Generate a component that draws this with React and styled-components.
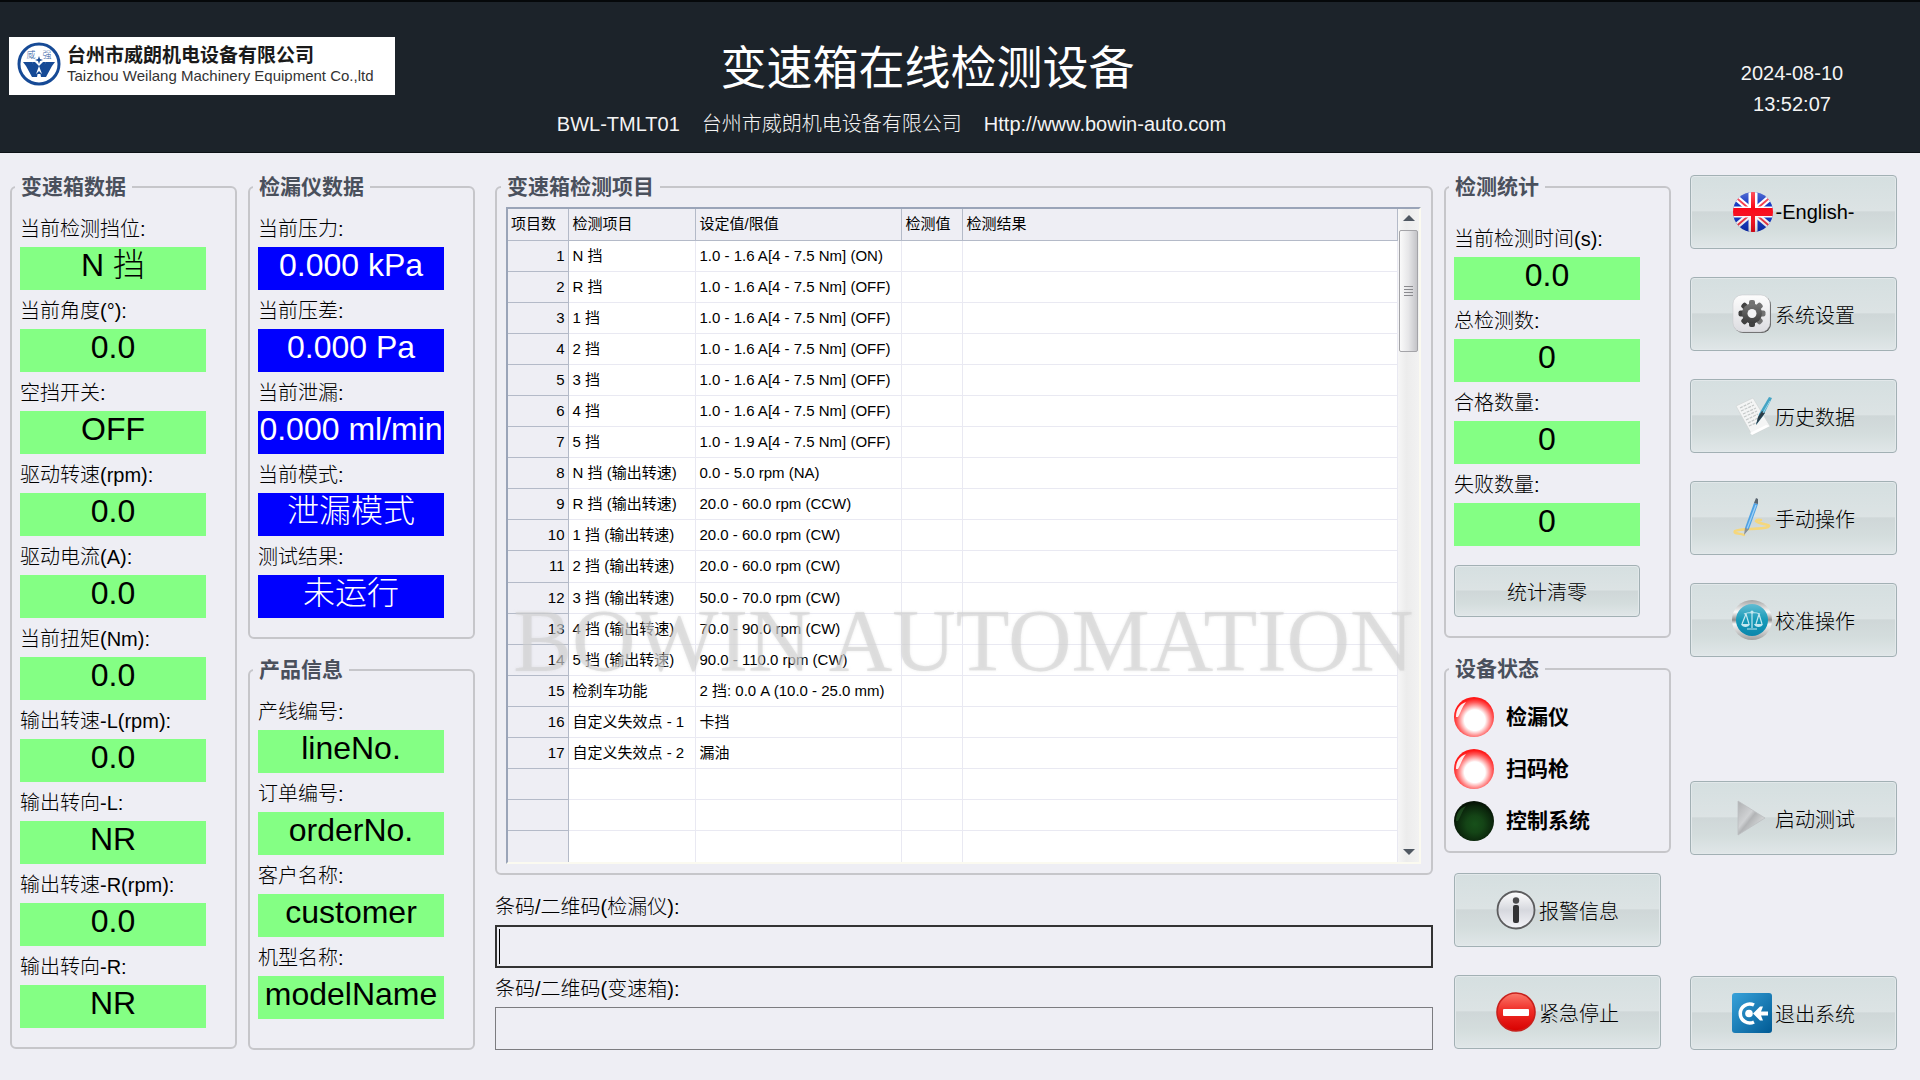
import React from "react";
import styled, { createGlobalStyle } from "styled-components";

const transmission = [
  { id: "gear", label: "当前检测挡位:", value: "N 挡" },
  { id: "angle", label: "当前角度(°):", value: "0.0" },
  { id: "neutral", label: "空挡开关:", value: "OFF" },
  { id: "drive-speed", label: "驱动转速(rpm):", value: "0.0" },
  { id: "drive-current", label: "驱动电流(A):", value: "0.0" },
  { id: "torque", label: "当前扭矩(Nm):", value: "0.0" },
  { id: "speed-l", label: "输出转速-L(rpm):", value: "0.0" },
  { id: "dir-l", label: "输出转向-L:", value: "NR" },
  { id: "speed-r", label: "输出转速-R(rpm):", value: "0.0" },
  { id: "dir-r", label: "输出转向-R:", value: "NR" },
];

const leak = [
  { id: "pressure", label: "当前压力:", value: "0.000 kPa" },
  { id: "pressure-diff", label: "当前压差:", value: "0.000 Pa" },
  { id: "leakage", label: "当前泄漏:", value: "0.000 ml/min" },
  { id: "mode", label: "当前模式:", value: "泄漏模式" },
  { id: "result", label: "测试结果:", value: "未运行" },
];

const product = [
  { id: "line", label: "产线编号:", value: "lineNo." },
  { id: "order", label: "订单编号:", value: "orderNo." },
  { id: "customer", label: "客户名称:", value: "customer" },
  { id: "model", label: "机型名称:", value: "modelName" },
];

const stats = [
  { id: "time", label: "当前检测时间(s):", value: "0.0" },
  { id: "total", label: "总检测数:", value: "0" },
  { id: "passed", label: "合格数量:", value: "0" },
  { id: "failed", label: "失败数量:", value: "0" },
];

const devices = [
  { name: "检漏仪", on: true },
  { name: "扫码枪", on: true },
  { name: "控制系统", on: false },
];

const items = [
  ["N 挡", "1.0 - 1.6 A[4 - 7.5 Nm] (ON)"],
  ["R 挡", "1.0 - 1.6 A[4 - 7.5 Nm] (OFF)"],
  ["1 挡", "1.0 - 1.6 A[4 - 7.5 Nm] (OFF)"],
  ["2 挡", "1.0 - 1.6 A[4 - 7.5 Nm] (OFF)"],
  ["3 挡", "1.0 - 1.6 A[4 - 7.5 Nm] (OFF)"],
  ["4 挡", "1.0 - 1.6 A[4 - 7.5 Nm] (OFF)"],
  ["5 挡", "1.0 - 1.9 A[4 - 7.5 Nm] (OFF)"],
  ["N 挡 (输出转速)", "0.0 - 5.0 rpm (NA)"],
  ["R 挡 (输出转速)", "20.0 - 60.0 rpm (CCW)"],
  ["1 挡 (输出转速)", "20.0 - 60.0 rpm (CW)"],
  ["2 挡 (输出转速)", "20.0 - 60.0 rpm (CW)"],
  ["3 挡 (输出转速)", "50.0 - 70.0 rpm (CW)"],
  ["4 挡 (输出转速)", "70.0 - 90.0 rpm (CW)"],
  ["5 挡 (输出转速)", "90.0 - 110.0 rpm (CW)"],
  ["检刹车功能", "2 挡: 0.0 A (10.0 - 25.0 mm)"],
  ["自定义失效点 - 1", "卡挡"],
  ["自定义失效点 - 2", "漏油"],
];

const TOTAL_ROWS = 20;

const LogoMark = () => (
  <svg width="44" height="44" viewBox="0 0 44 44" aria-hidden="true">
    <circle cx="22" cy="22" r="20" fill="#fff" stroke="#164a96" strokeWidth="3" />
    <path d="M6 20h9l6 10-1 5h-5l-6-11z" fill="#164a96" />
    <path d="M38 20h-9l-6 10 1 5h5l6-11z" fill="#164a96" />
    <path d="M15 20l3 0 4 4 4-4h3l-5 12h-4z" fill="#164a96" />
    <path d="M22 24l3 8-3-3-3 3z" fill="#fff" />
    <path d="M22 14l1 3 3 1-3 1-1 3-1-3-3-1 3-1z" fill="#164a96" />
    <text x="14" y="16" fontSize="9" textAnchor="middle" fill="#2f5ea4">
      威
    </text>
    <text x="30" y="16" fontSize="9" textAnchor="middle" fill="#2f5ea4">
      强
    </text>
  </svg>
);

const FlagIcon = () => (
  <svg width="40" height="40" viewBox="0 0 40 40" aria-hidden="true">
    <defs>
      <clipPath id="flag-clip">
        <circle cx="20" cy="20" r="20" />
      </clipPath>
      <linearGradient id="flag-shine" x1="0" y1="0" x2="0" y2="1">
        <stop offset="0" stopColor="#fff" stopOpacity="0.3" />
        <stop offset="0.4" stopColor="#fff" stopOpacity="0" />
        <stop offset="1" stopColor="#000" stopOpacity="0.2" />
      </linearGradient>
    </defs>
    <g clipPath="url(#flag-clip)">
      <rect width="40" height="40" fill="#0a2fc0" />
      <path d="M0 3l40 34M40 3L0 37" stroke="#fff" strokeWidth="6" />
      <path d="M0 3l40 34M40 3L0 37" stroke="#f43040" strokeWidth="2" />
      <path d="M20 0v40" stroke="#fff" strokeWidth="9" />
      <path d="M0 20h40" stroke="#fff" strokeWidth="11" />
      <path d="M20 0v40" stroke="#fa0818" strokeWidth="4" />
      <path d="M0 20h40" stroke="#fa0818" strokeWidth="8" />
      <rect width="40" height="40" fill="url(#flag-shine)" />
    </g>
  </svg>
);

const GearIcon = () => (
  <svg width="40" height="40" viewBox="0 0 40 40" aria-hidden="true">
    <defs>
      <linearGradient id="gear-bg" x1="0" y1="0" x2="0" y2="1">
        <stop offset="0" stopColor="#fdfdfd" />
        <stop offset="1" stopColor="#dcdce0" />
      </linearGradient>
      <linearGradient id="gear-fg" x1="0" y1="0" x2="0" y2="1">
        <stop offset="0" stopColor="#777" />
        <stop offset="1" stopColor="#3c3c3c" />
      </linearGradient>
    </defs>
    <rect x="2" y="2" width="37" height="37" rx="9" fill="#5a5a5a" />
    <rect x="1" y="1" width="37" height="37" rx="9" fill="url(#gear-bg)" stroke="#c4c4c8" strokeWidth="0.5" />
    <g fill="url(#gear-fg)">
      {[0, 45, 90, 135].map((turn) => (
        <rect key={turn} x="17" y="6" width="6" height="27" rx="2" transform={`rotate(${turn} 20 19.5)`} />
      ))}
      <circle cx="20" cy="19.5" r="10" />
    </g>
    <circle cx="20" cy="19.5" r="4.5" fill="#f2f2f4" />
  </svg>
);

const HistoryIcon = () => (
  <svg width="40" height="40" viewBox="0 0 40 40" aria-hidden="true">
    <path d="M4 10L21 2l17 28-18 9z" fill="#f4f5f5" stroke="#d0d4d4" strokeWidth="0.7" />
    <path d="M20 39l18-9-4-1-16 8z" fill="#fff" />
    <path
      d="M8 12l12-6M9 15l13-6M11 18l13-6M12 21l13-6M14 24l12-6M16 27l10-5M17 30l9-4"
      stroke="#c4c8c8"
      strokeWidth="1.2"
      strokeDasharray="3 1"
    />
    <path d="M37 1l3 1-9 18-7 9 3-11z" fill="#45a4c4" />
    <path d="M30 15l3 2-9 12 2-8z" fill="#2a3d48" />
    <path d="M38 5l-7 12" stroke="#9ad8ea" strokeWidth="1" />
  </svg>
);

const PenIcon = () => (
  <svg width="40" height="40" viewBox="0 0 40 40" aria-hidden="true">
    <path
      d="M12 37c-4-2-11-1-9-4 6-3 25-1 33-4 5-3-8-2-12-6 1-2 4-1 5-1"
      fill="none"
      stroke="#f5d77c"
      strokeWidth="2.5"
      strokeLinecap="round"
    />
    <path d="M22 5l4 1-9 25-4 4v-5z" fill="#4ea2e4" />
    <path d="M24 7l-9 24" stroke="#9fd0f6" strokeWidth="1.3" />
    <path d="M22 5l2-5 2 1v5z" fill="#5a6570" />
    <path d="M13 30l4 1-5 6z" fill="#8b8f92" />
  </svg>
);

const ScalesIcon = () => (
  <svg width="40" height="40" viewBox="0 0 40 40" aria-hidden="true">
    <defs>
      <linearGradient id="scales-ring" x1="0" y1="0" x2="0" y2="1">
        <stop offset="0" stopColor="#a4a4a4" />
        <stop offset="0.3" stopColor="#fafafa" />
        <stop offset="0.5" stopColor="#8c8c8c" />
        <stop offset="0.6" stopColor="#f6f6f6" />
        <stop offset="1" stopColor="#a0a0a0" />
      </linearGradient>
      <linearGradient id="scales-bg" x1="0" y1="0" x2="0" y2="1">
        <stop offset="0" stopColor="#62bcd2" />
        <stop offset="0.5" stopColor="#179ab8" />
        <stop offset="1" stopColor="#0a86ac" />
      </linearGradient>
    </defs>
    <circle cx="20" cy="20" r="20" fill="url(#scales-ring)" />
    <circle cx="20" cy="20" r="16" fill="url(#scales-bg)" />
    <g fill="none" stroke="#c4e8f0" strokeWidth="1.2">
      <path d="M20 11v17M12 14c4-2 12-2 16 0M15 29h10M14 14l-4 10M14 14l3 10M27 14l-3 10M27 14l3 10" />
    </g>
    <path d="M9 24h9c-1 4-8 4-9 0zM22 24h9c-1 4-8 4-9 0z" fill="#c4e8f0" />
    <circle cx="20" cy="12" r="1.6" fill="#c4e8f0" />
  </svg>
);

const PlayIcon = () => (
  <svg width="40" height="40" viewBox="0 0 40 40" aria-hidden="true">
    <defs>
      <linearGradient id="play-fill" x1="0" y1="0" x2="1" y2="1">
        <stop offset="0" stopColor="#aeb0b2" />
        <stop offset="0.4" stopColor="#d0d2d4" />
        <stop offset="0.5" stopColor="#b2b4b6" />
        <stop offset="0.8" stopColor="#dadcdd" />
      </linearGradient>
    </defs>
    <path d="M6 3l27 17L6 37z" fill="url(#play-fill)" stroke="#bcbfc1" strokeWidth="0.8" />
  </svg>
);

const InfoIcon = () => (
  <svg width="40" height="40" viewBox="0 0 40 40" aria-hidden="true">
    <defs>
      <linearGradient id="info-bg" x1="0" y1="0" x2="0" y2="1">
        <stop offset="0" stopColor="#fff" />
        <stop offset="0.5" stopColor="#d6d8de" />
        <stop offset="1" stopColor="#f4f4f8" />
      </linearGradient>
    </defs>
    <circle cx="20" cy="20" r="18.5" fill="url(#info-bg)" stroke="#5c5c5e" strokeWidth="1.8" />
    <circle cx="20" cy="10.5" r="3.2" fill="#4a4a4c" />
    <rect x="17" y="15" width="6" height="18" rx="2" fill="#333335" />
  </svg>
);

const StopIcon = () => (
  <svg width="40" height="40" viewBox="0 0 40 40" aria-hidden="true">
    <defs>
      <linearGradient id="stop-bg" x1="0" y1="0" x2="0" y2="1">
        <stop offset="0" stopColor="#fb7a6c" />
        <stop offset="0.45" stopColor="#f02e28" />
        <stop offset="1" stopColor="#d80000" />
      </linearGradient>
    </defs>
    <circle cx="20" cy="20" r="19" fill="url(#stop-bg)" stroke="#c8201c" strokeWidth="1.6" />
    <rect x="7" y="17" width="26" height="7" rx="1" fill="#fff" />
  </svg>
);

const ExitIcon = () => (
  <svg width="40" height="40" viewBox="0 0 40 40" aria-hidden="true">
    <defs>
      <linearGradient id="exit-bg" x1="0" y1="0" x2="1" y2="1">
        <stop offset="0" stopColor="#38a2da" />
        <stop offset="1" stopColor="#005a94" />
      </linearGradient>
    </defs>
    <rect width="40" height="40" rx="3" fill="url(#exit-bg)" />
    <path d="M22 12a9.5 9.5 0 1 0 0 17" fill="none" stroke="#fff" strokeWidth="3.5" />
    <circle cx="17" cy="20.5" r="3.8" fill="#fff" />
    <path d="M21 20.500l7-7h3l-2 5h7v4h-7l2 5h-3z" fill="#fff" />
  </svg>
);

const Led = ({ on, index }) => (
  <svg width="40" height="40" viewBox="0 0 40 40" aria-hidden="true">
    <defs>
      <radialGradient id={`led-${index}`} cx="0.52" cy="0.58" r="0.54">
        <stop offset="0" stopColor={on ? "#fff" : "#17501a"} />
        <stop offset={on ? "0.48" : "0.4"} stopColor={on ? "#fff" : "#144416"} />
        <stop offset="0.82" stopColor={on ? "#ff5c5c" : "#0b260c"} />
        <stop offset="1" stopColor={on ? "#ff1818" : "#061406"} />
      </radialGradient>
    </defs>
    <circle cx="20" cy="20" r="20" fill={`url(#led-${index})`} />
    <path d="M2 20C2 12 6 7 12 5c-4 5-5 10-8 15z" fill={on ? "#fff" : "#2b6a2e"} opacity={on ? 0.9 : 0.5} />
  </svg>
);

const FieldList = ({ fields, tone }) =>
  fields.map(({ id, label, value }) => (
    <Field key={id}>
      <FieldLabel htmlFor={id}>{label}</FieldLabel>
      <Readout id={id} $tone={tone}>
        {value}
      </Readout>
    </Field>
  ));

const ItemTable = () => (
  <TableFrame>
    <Table>
      <colgroup>
        <NumberCol />
        <ItemCol />
        <LimitCol />
        <ValueCol />
        <col />
      </colgroup>
      <thead>
        <tr>
          <th scope="col">项目数</th>
          <th scope="col">检测项目</th>
          <th scope="col">设定值/限值</th>
          <th scope="col">检测值</th>
          <th scope="col">检测结果</th>
        </tr>
      </thead>
      <tbody>
        {Array.from({ length: TOTAL_ROWS }, (_, i) => {
          const [name, limit] = items[i] || [];
          return (
            <tr key={i}>
              <th scope="row">{name && i + 1}</th>
              <td>{name}</td>
              <td>{limit}</td>
              <td />
              <td />
            </tr>
          );
        })}
      </tbody>
    </Table>
    <Scrollbar>
      <Arrow viewBox="0 0 12 8">
        <path d="M0 7l6-6 6 6z" />
      </Arrow>
      <Thumb />
      <Arrow viewBox="0 0 12 8">
        <path d="M0 1l6 6 6-6z" />
      </Arrow>
    </Scrollbar>
    <Watermark>BOWIN AUTOMATION</Watermark>
  </TableFrame>
);

const App = () => {
  return (
    <>
      <GlobalStyle />
      <Header>
        <Logo>
          <LogoMark />
          <div>
            <LogoName>台州市威朗机电设备有限公司</LogoName>
            <LogoSub>Taizhou Weilang Machinery Equipment Co.,ltd</LogoSub>
          </div>
        </Logo>
        <Heading>
          <h1>变速箱在线检测设备</h1>
          <Subline>
            <span>BWL-TMLT01</span>
            <span>台州市威朗机电设备有限公司</span>
            <a href="http://www.bowin-auto.com">Http://www.bowin-auto.com</a>
          </Subline>
        </Heading>
        <Clock>
          <span>2024-08-10</span>
          <span>13:52:07</span>
        </Clock>
      </Header>

      <Main>
        <Column>
          <Panel>
            <legend>变速箱数据</legend>
            <FieldList fields={transmission} />
          </Panel>
        </Column>

        <Column>
          <Panel>
            <legend>检漏仪数据</legend>
            <FieldList fields={leak} tone="blue" />
          </Panel>
          <Panel $grow>
            <legend>产品信息</legend>
            <FieldList fields={product} />
          </Panel>
        </Column>

        <Center>
          <TablePanel>
            <legend>变速箱检测项目</legend>
            <ItemTable />
          </TablePanel>
          <Field>
            <FieldLabel htmlFor="code-leak">条码/二维码(检漏仪):</FieldLabel>
            <CodeBox>
              <CodeInput id="code-leak" type="text" $active />
              <Caret />
            </CodeBox>
          </Field>
          <Field>
            <FieldLabel htmlFor="code-gearbox">条码/二维码(变速箱):</FieldLabel>
            <CodeBox>
              <CodeInput id="code-gearbox" type="text" />
            </CodeBox>
          </Field>
        </Center>

        <Column>
          <StatsPanel>
            <legend>检测统计</legend>
            <FieldList fields={stats} />
            <ResetButton type="button">统计清零</ResetButton>
          </StatsPanel>
          <StatusPanel>
            <legend>设备状态</legend>
            <DeviceList>
              {devices.map(({ name, on }, i) => (
                <li key={name}>
                  <Led on={on} index={i} />
                  {name}
                </li>
              ))}
            </DeviceList>
          </StatusPanel>
          <AlarmActions>
            <Button type="button">
              <InfoIcon />
              报警信息
            </Button>
            <Button type="button">
              <StopIcon />
              紧急停止
            </Button>
          </AlarmActions>
        </Column>

        <Actions>
          <Button type="button">
            <FlagIcon />
            -English-
          </Button>
          <Button type="button">
            <GearIcon />
            系统设置
          </Button>
          <Button type="button">
            <HistoryIcon />
            历史数据
          </Button>
          <Button type="button">
            <PenIcon />
            手动操作
          </Button>
          <Button type="button">
            <ScalesIcon />
            校准操作
          </Button>
          <StartButton type="button">
            <PlayIcon />
            启动测试
          </StartButton>
          <ExitButton type="button">
            <ExitIcon />
            退出系统
          </ExitButton>
        </Actions>
      </Main>
    </>
  );
};

const GlobalStyle = createGlobalStyle`
  * {
    box-sizing: border-box;
  }
  body {
    margin: 0;
    background: #eeeef4;
    color: #000;
    font: 20px "Liberation Sans", "Noto Sans CJK SC", sans-serif;
    font-weight: 300;
  }
  button, input {
    font: inherit;
    color: inherit;
  }
`;

const Header = styled.header`
  display: grid;
  grid-template-columns: 386px 1fr 516px;
  height: 153px;
  padding: 0 8px 0 9px;
  background: #1c232a;
  border-top: 2px solid #05080a;
  border-bottom: 1px solid #0c1116;
  color: #f4f4f4;
`;

const Logo = styled.div`
  display: flex;
  gap: 6px;
  height: 58px;
  margin-top: 35px;
  padding: 5px 8px;
  background: #fff;
  color: #1a1a1a;
  white-space: nowrap;
`;

const LogoName = styled.div`
  font-size: 19px;
  font-weight: 700;
  line-height: 28px;
`;

const LogoSub = styled.div`
  font-size: 15px;
  line-height: 12px;
  color: #333;
`;

const Heading = styled.div`
  display: flex;
  flex-direction: column;
  align-items: center;
  padding-top: 32px;

  h1 {
    margin: 0 0 0 64px;
    font-size: 46px;
    line-height: 68px;
    font-weight: 400;
    color: #fff;
  }
`;

const Subline = styled.div`
  display: flex;
  gap: 22px;
  margin-right: 8px;
  line-height: 44px;
  white-space: nowrap;

  a {
    color: inherit;
    text-decoration: none;
  }
`;

const Clock = styled.div`
  display: flex;
  flex-direction: column;
  align-items: center;
  justify-self: end;
  width: 240px;
  padding-top: 56px;
  line-height: 31px;
`;

const Main = styled.main`
  display: grid;
  grid-template-columns: 227px 227px 1fr 227px 215px;
  padding: 19px 23px 30px 10px;
  column-gap: 11px;
`;

const Column = styled.div`
  display: flex;
  flex-direction: column;
  gap: 16px;
`;

const Center = styled(Column)`
  gap: 0;
  margin-left: 9px;
`;

const Panel = styled.fieldset`
  flex: ${({ $grow }) => ($grow ? "1" : "none")};
  min-width: 0;
  margin: 0;
  padding: 7px 8px 19px;
  border: 2px solid #c6c6ca;
  border-radius: 6px;

  legend {
    margin-left: -5px;
    padding: 0 6px;
    font-size: 21px;
    font-weight: 700;
    line-height: 29px;
    color: #4a505c;
  }
`;

const TablePanel = styled(Panel)`
  margin-bottom: 11px;
  padding: 6px 10px 9px 9px;
`;

const StatsPanel = styled(Panel)`
  padding-top: 17px;
`;

const StatusPanel = styled(Panel)`
  padding: 14px 8px 10px;
`;

const Field = styled.div`
  display: flex;
  flex-direction: column;
`;

const FieldLabel = styled.label`
  padding-top: 4px;
  line-height: 35px;
  white-space: nowrap;
`;

const Readout = styled.output`
  width: 186px;
  height: 43px;
  font-size: 32px;
  line-height: 36px;
  text-align: center;
  white-space: nowrap;
  background: ${({ $tone }) => ($tone === "blue" ? "#0000ff" : "#84ff84")};
  color: ${({ $tone }) => ($tone === "blue" ? "#fff" : "#000")};
`;

const TableFrame = styled.div`
  position: relative;
  display: flex;
  border: 2px solid;
  border-color: #9aa4b8 #fbfaf0 #fbfaf0 #9aa4b8;
`;

const Table = styled.table`
  flex: 1;
  height: 653px;
  table-layout: fixed;
  border-collapse: collapse;
  background: #fff;
  font-size: 15px;
  font-weight: 400;
  line-height: 20px;
  white-space: nowrap;

  tr {
    height: 31px;
  }
  th,
  td {
    padding: 0 4px;
    font-weight: inherit;
    text-align: left;
    border-right: 1px solid #e9e9f2;
    border-bottom: 1px solid #e9e9f2;
  }
  thead th,
  tbody th {
    background: #eeeef4;
    border-color: #b4bac8;
  }
  tbody th {
    text-align: right;
    padding-right: 3px;
  }
  tr > :first-child {
    padding-left: 3px;
  }
  tbody tr:last-child > * {
    border-bottom: 0;
  }
`;

const NumberCol = styled.col`
  width: 60px;
`;

const ItemCol = styled.col`
  width: 127px;
`;

const LimitCol = styled.col`
  width: 206px;
`;

const ValueCol = styled.col`
  width: 61px;
`;

const Scrollbar = styled.div`
  display: flex;
  flex-direction: column;
  align-items: center;
  width: 21px;
  padding: 5px 0 6px;
  background: linear-gradient(90deg, #f6f6f6, #ececec 40%, #f2f2f2);

  :last-child {
    margin-top: auto;
  }
`;

const Arrow = styled.svg`
  width: 12px;
  height: 8px;
  fill: #505862;
`;

const Thumb = styled.div`
  width: 19px;
  height: 122px;
  margin-top: 8px;
  border: 1px solid #a4a4a8;
  border-radius: 2px;
  background:
    repeating-linear-gradient(#8a8a8e 0 1px, transparent 1px 3px) center / 9px 10px no-repeat,
    linear-gradient(90deg, #fafafa, #e6e6e8 50%, #c4c4c8);
`;

/* company name printed across the grid */
const Watermark = styled.div`
  position: absolute;
  left: 0;
  right: 0;
  top: 382px;
  font-family: "Liberation Serif", serif;
  font-size: 88px;
  line-height: 100px;
  text-align: center;
  white-space: nowrap;
  color: rgba(205, 205, 205, 0.5);
  text-shadow: 0 0 3px rgba(205, 205, 205, 0.4);
  pointer-events: none;
`;

const CodeBox = styled.div`
  position: relative;
  display: flex;
`;

const CodeInput = styled.input`
  flex: 1;
  min-width: 0;
  height: 43px;
  padding: 0 8px;
  background: transparent;
  border: ${({ $active }) => ($active ? "2px solid #333" : "1px solid #7c7c80")};
  outline: 0;
`;

const Caret = styled.span`
  position: absolute;
  left: 4px;
  top: 4px;
  bottom: 4px;
  width: 1px;
  background: #000;
`;

const Button = styled.button`
  display: flex;
  align-items: center;
  justify-content: center;
  gap: 3px;
  height: 74px;
  padding: 0;
  border: 1px solid #a2b0b4;
  border-radius: 4px;
  background: linear-gradient(#d5dfe0, #dce3e4 48%, #cfd7d8 50%, #d4dddd 75%, #e0e6e8);
  box-shadow: inset 0 0 0 1px #e2e8ea;
`;

const ResetButton = styled(Button)`
  width: 186px;
  height: 52px;
  margin-top: 19px;
`;

const AlarmActions = styled.div`
  display: flex;
  flex-direction: column;
  gap: 28px;
  margin: 4px 10px 0;
`;

const DeviceList = styled.ul`
  display: flex;
  flex-direction: column;
  gap: 12px;
  margin: 0;
  padding: 0;
  list-style: none;

  li {
    display: flex;
    align-items: center;
    gap: 12px;
    font-size: 21px;
    line-height: 40px;
    font-weight: 700;
  }
`;

const Actions = styled.div`
  display: flex;
  flex-direction: column;
  gap: 28px;
  margin: 3px 0 0 8px;
`;

const StartButton = styled(Button)`
  margin-top: 96px;
`;

const ExitButton = styled(Button)`
  margin-top: auto;
`;

export default App;
